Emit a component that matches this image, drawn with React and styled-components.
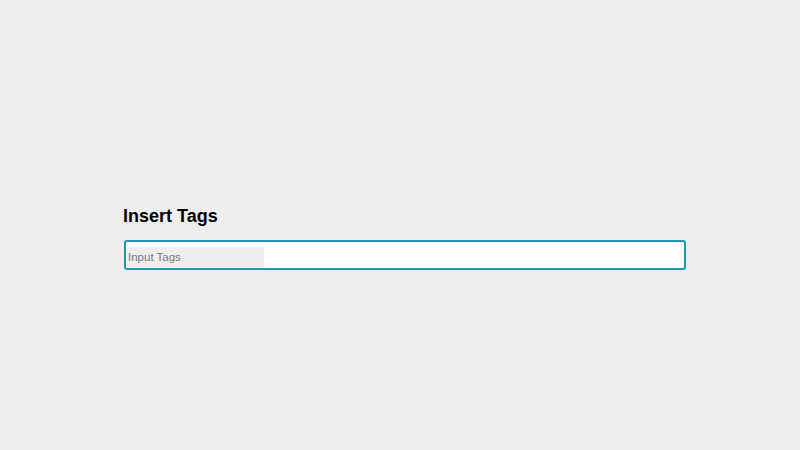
import React, { useState } from "react";
import styled, { createGlobalStyle } from "styled-components";

const GlobalStyle = createGlobalStyle`
  html, body {
    margin: 0;
    padding: 0;
    background: #eeeeee;
    font-family: "Liberation Sans", Arial, sans-serif;
  }
`;

const Page = styled.div`
  width: 800px;
  height: 450px;
  box-sizing: border-box;
  padding: 205px 114px 0 124px;
`;

const Title = styled.h2`
  margin: 0 0 13px -1px;
  font-size: 18px;
  line-height: 22px;
  font-weight: 700;
  color: #000;
`;

const TagBox = styled.div`
  display: flex;
  flex-wrap: wrap;
  align-items: center;
  box-sizing: border-box;
  height: 30px;
  padding: 3px 1px 0 1px;
  border: 2px solid #1f97b3;
  border-radius: 3px;
  background: #fff;
`;

const TagInput = styled.input`
  width: 137px;
  height: 20px;
  box-sizing: border-box;
  padding: 0 1px;
  border: none;
  outline: none;
  background: #efefef;
  font-family: "Liberation Sans", Arial, sans-serif;
  font-size: 11.5px;
  color: #333;

  &::placeholder {
    color: #777;
  }
`;

export default function App() {
  const [value, setValue] = useState("");

  return (
    <>
      <GlobalStyle />
      <Page>
        <Title>Insert Tags</Title>
        <TagBox>
          <TagInput
            placeholder="Input Tags"
            value={value}
            onChange={(e) => setValue(e.target.value)}
          />
        </TagBox>
      </Page>
    </>
  );
}
